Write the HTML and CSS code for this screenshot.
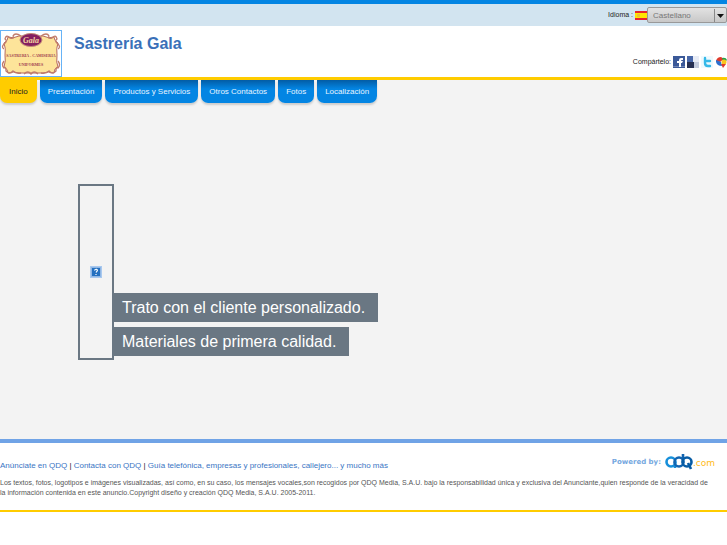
FILE: index.html
```
<!DOCTYPE html>
<html lang="es">
<head>
<meta charset="utf-8">
<title>Sastrería Gala</title>
<link rel="stylesheet" href="styles.css">
</head>
<body>
<div class="topbar">
  <label for="lang">Idioma :</label>
  <svg class="flag" viewBox="0 0 12 9" aria-hidden="true"><path fill="#e8252b" d="M0 0h12v9H0z"/><path fill="#ffe600" d="M0 2h12v5H0z"/><path fill="#f0c030" d="M2 3h3v3H2z"/></svg>
  <span class="picker">
    <select id="lang"><option>Castellano</option></select>
    <svg class="arrow" viewBox="0 0 13 15" aria-hidden="true"><path d="M.5 1v13" stroke="#888"/><path d="M3 6h7L6.500 10z" fill="#111"/></svg>
  </span>
</div>
<header class="header">
  <a class="logo" href="#" aria-label="Gala">
    <svg viewBox="0 0 60 45">
      <path fill="#fde49a" stroke="#b66a5c" stroke-width="1" d="M7 6Q12 8 18 5H42Q48 8 53 6Q53 10 57 12Q55 17 56 24Q55 32 57 36Q53 37 53 42Q47 40 42 42H18Q12 40 7 42Q7 38 3 36Q5 30 4 24Q5 17 3 12Q7 10 7 6Z"/>
      <g fill="none" stroke="#c17c6b" stroke-width="1.3">
        <path d="M20 5Q14 1 12 5Q14 8 9 7Q5 3 4 8Q7 10 3 13Q0 16 3 18M40 5Q46 1 48 5Q46 8 51 7Q55 3 56 8Q53 10 57 13Q60 16 57 18"/>
        <path d="M3 30Q0 34 3 37Q5 35 5 40Q9 44 12 40Q15 43 20 42M57 30Q60 34 57 37Q55 35 55 40Q51 44 48 40Q45 43 40 42M23 43Q27 39 30 43Q33 39 37 43"/>
      </g>
      <ellipse cx="30" cy="9" rx="11" ry="6.500" fill="#852060" stroke="#c38b78"/>
      <text class="logo-script" x="30" y="12" text-anchor="middle">Gala</text>
      <text class="logo-text" x="30" y="26" text-anchor="middle">SASTRERIA - CAMISERIA</text>
      <text class="logo-text" x="30" y="35" text-anchor="middle">UNIFORMES</text>
    </svg>
  </a>
  <h1>Sastrería Gala</h1>
  <div class="share">
    <span>Compártelo:</span>
    <a href="#" aria-label="Facebook"><svg viewBox="0 0 12 12"><path fill="#3b5998" d="M0 0h12v12H0z"/><path fill="#6d84b4" d="M0 10h12v1H0z"/><path fill="#fff" d="M6 11V7H4V5h2V4q0-2 2-2h2v2H9Q8 4 8 5h2L9 7H8v4z"/></svg></a>
    <a href="#" aria-label="Delicious"><svg viewBox="0 0 12 12"><path fill="#c3cbdc" d="M0 0h12v12H0z"/><path fill="#4867a8" d="M0 0h6v6H0z"/><path fill="#e8ecf5" d="M6 0h6v6H6z"/><path fill="#273052" d="M0 6h7v6H0z"/></svg></a>
    <a href="#" aria-label="Twitter"><svg viewBox="0 0 12 12"><path fill="#eefafe" d="M0 0h12v12H0z"/><path fill="none" stroke="#35b9e8" stroke-width="2.400" stroke-linecap="round" d="M4 2v5q0 3 3 3h2M4 5h5"/></svg></a>
    <a href="#" aria-label="Google Buzz"><svg viewBox="0 0 12 12"><path fill="#df3a2b" d="M1 5q1-4 5-4l3 2-4 3z"/><path fill="#2c6fce" d="M1 4l5 2 1 4q-5 0-6-4z"/><path fill="#20a34a" d="M7 2q4-1 5 2l-3 3z"/><circle cx="9" cy="6" r="2.500" fill="#f9c51b"/><path fill="#df3a2b" d="M6 8l5 0-3 4z"/></svg></a>
  </div>
</header>
<nav class="tabs">
  <a class="tab active" href="#">Inicio</a>
  <a class="tab" href="#">Presentación</a>
  <a class="tab" href="#">Productos y Servicios</a>
  <a class="tab" href="#">Otros Contactos</a>
  <a class="tab" href="#">Fotos</a>
  <a class="tab" href="#">Localización</a>
</nav>
<main class="main">
  <div class="frame">
    <svg class="missing" viewBox="0 0 12 12" role="img" aria-label="Imagen"><path fill="#a9c9ef" d="M0 0h12v12H0z"/><path fill="#8fb6e4" d="M1 1h10v10H1z"/><path fill="#2470c0" d="M2 2h8v8H2z"/><path d="M4.500 4.500Q5 3 6.500 3.300Q8 4 7 5.200L6 6.500M6 8v1" fill="none" stroke="#fff" stroke-width="1.200"/></svg>
  </div>
  <div class="slogans">
    <p>Trato con el cliente personalizado.</p>
    <p>Materiales de primera calidad.</p>
  </div>
</main>
<footer class="footer">
  <div class="footer-top">
    <p class="links"><a href="#">Anúnciate en QDQ</a> | <a href="#">Contacta con QDQ</a> | <a href="#">Guía telefónica, empresas y profesionales, callejero... y mucho más</a></p>
    <a class="powered" href="#"><span>Powered by:</span>
      <svg viewBox="0 0 50 18" role="img" aria-label="qdq.com"><g fill="none" stroke="#1264b0" stroke-width="2.600"><circle cx="6" cy="9" r="4.500" stroke="#168fda"/><path d="M10 9v6" stroke="#168fda"/><circle cx="14" cy="9" r="4.500"/><path d="M18 10V1"/><circle cx="22" cy="9" r="4.500" stroke="#075ca5"/><path d="M23 10l3 6" stroke="#075ca5"/></g><text class="com" x="28" y="13">.com</text></svg>
    </a>
  </div>
  <p class="legal">Los textos, fotos, logotipos e imágenes visualizadas, así como, en su caso, los mensajes vocales,son recogidos por QDQ Media, S.A.U. bajo la responsabilidad única y exclusiva del Anunciante,quien responde de la veracidad de la información contenida en este anuncio.Copyright diseño y creación QDQ Media, S.A.U. 2005-2011.</p>
</footer>
</body>
</html>
```
FILE: styles.css
```
* { box-sizing: border-box; }
body { margin: 0; font: 8px/10px "Liberation Sans", Arial, sans-serif; color: #222; background: #fff; }
p, h1 { margin: 0; }
a { color: #3a75c4; text-decoration: none; }
svg { display: block; }
.topbar { display: flex; align-items: center; justify-content: flex-end; height: 26px; border-top: 4px solid #0385e3; background: #d2e4f0; font-size: 7px; }
.flag { width: 12px; height: 9px; margin-left: 2px; }
.picker { display: grid; align-items: center; }
.picker > * { grid-area: 1 / 1; }
select { appearance: none; width: 80px; height: 16px; padding: 0 5px; border: 1px solid #999; border-radius: 2px; background: linear-gradient(#e2e2e2, #c8c8c8); color: #777; font: 8px "Liberation Sans", Arial, sans-serif; }
.arrow { justify-self: end; width: 13px; height: 15px; pointer-events: none; }
.header { display: flex; height: 54px; border-bottom: 3px solid #fc0; }
.logo { width: 62px; height: 47px; margin-top: 4px; border: 1px solid #67b3f6; }
.logo svg { width: 60px; height: 45px; }
.logo-script { font: italic bold 8px "Liberation Serif", serif; fill: #f5d5a0; }
.logo-text { font: bold 4px "Liberation Serif", serif; fill: #a04050; }
h1 { margin: 9px 0 0 12px; font-size: 16px; line-height: 18px; color: #3a70b8; }
.share { display: flex; gap: 2px; align-self: flex-end; align-items: center; margin: 0 0 9px auto; font-size: 7px; }
.share a svg { width: 12px; height: 12px; }
.tabs { display: flex; gap: 3px; background: #f3f3f3; height: 26px; }
.tab { height: 23px; padding: 7px 8px 0; border-radius: 0 0 7px 7px; background: linear-gradient(#035ca5, #0385e3 9px); box-shadow: 0 2px 2px #ccc; color: #e8f4ff; }
.tab.active { padding: 7px 9px 0; background: #fc0; color: #222; }
.main { display: flex; align-items: flex-start; min-height: 333px; padding: 78px 0 0 78px; background: #f3f3f3; }
.frame { display: flex; align-items: center; justify-content: center; width: 36px; height: 176px; border: 2px solid #6a7783; }
.missing { width: 12px; height: 12px; }
.slogans { display: flex; flex-direction: column; align-items: flex-start; gap: 5px; padding-top: 109px; }
.slogans p { padding: 0 13px 0 8px; background: #6a7783; color: #fff; font-size: 16px; line-height: 29px; }
.footer { border-top: 4px solid #70a3e6; border-bottom: 2px solid #fc0; padding-bottom: 12px; }
.footer-top { display: flex; align-items: flex-end; justify-content: space-between; padding: 10px 12px 7px 0; }
.powered { display: flex; align-items: center; gap: 4px; font: bold 7px "DejaVu Sans", sans-serif; color: #75a8e0; }
.powered svg { width: 50px; height: 18px; }
.com { font: 9px "DejaVu Sans", sans-serif; fill: #fb2; }
.legal { padding-right: 14px; font-size: 7px; color: #555; }
```
